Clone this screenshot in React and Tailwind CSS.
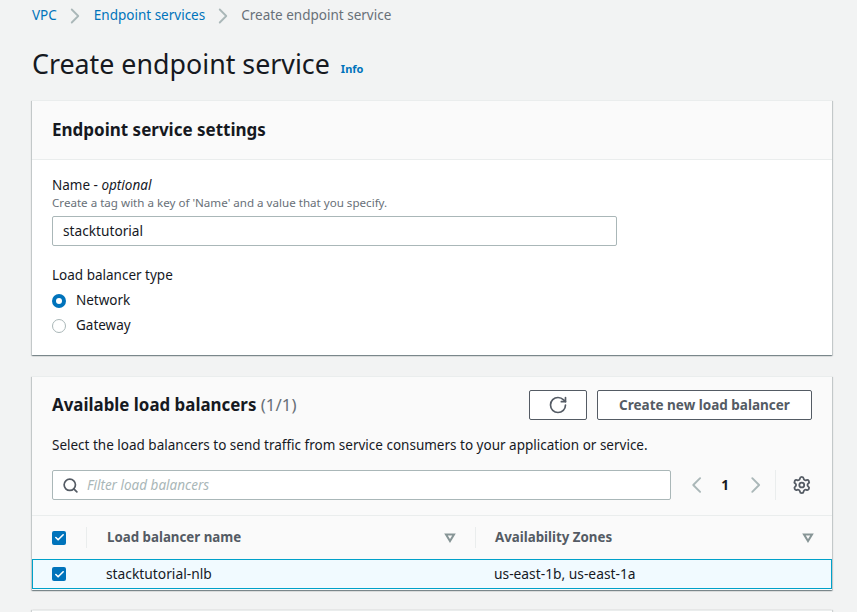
import React from 'react';
import { ChevronRight, ChevronLeft, RotateCw, Search, Settings, Check } from 'lucide-react';

function Checkbox() {
  return (
    <span className="flex h-[14px] w-[14px] items-center justify-center rounded-[2px] bg-[#0073bb]">
      <Check size={11} strokeWidth={3.5} className="text-white" />
    </span>
  );
}

function SortIcon() {
  return (
    <svg width="12" height="10" viewBox="0 0 12 10" className="shrink-0">
      <path d="M2 1.5h8L6 8z" fill="none" stroke="#879596" strokeWidth="2" />
    </svg>
  );
}

function Radio({ checked, label }) {
  return (
    <div className="flex h-[25px] items-center gap-[10px]">
      {checked ? (
        <span className="flex h-[14px] w-[14px] items-center justify-center rounded-full bg-[#0073bb]">
          <span className="h-[6px] w-[6px] rounded-full bg-white" />
        </span>
      ) : (
        <span className="h-[14px] w-[14px] rounded-full border border-[#aab7b8] bg-white" />
      )}
      <span className="text-[13.5px] text-[#16191f]">{label}</span>
    </div>
  );
}

export default function App() {
  return (
    <div className="h-[612px] overflow-hidden bg-[#f2f3f3] pl-[32px] pr-[25px] font-['Noto_Sans',sans-serif] text-[#16191f]">
      {/* breadcrumb */}
      <div className="flex h-[31px] items-center text-[13.5px]">
        <span className="text-[#0073bb]">VPC</span>
        <ChevronRight size={26} strokeWidth={1.7} className="ml-[5px] mr-[6px] text-[#aab7b8]" />
        <span className="text-[#0073bb]">Endpoint services</span>
        <ChevronRight size={26} strokeWidth={1.7} className="mx-[5px] text-[#aab7b8]" />
        <span className="text-[#687078]">Create endpoint service</span>
      </div>

      <div className="flex h-[69px] items-center pb-[3px]">
        <h1 className="text-[26.8px] leading-[40px] text-[#16191f]">Create endpoint service</h1>
        <span className="ml-[11px] mt-[10px] text-[11px] font-bold text-[#0073bb]">Info</span>
      </div>

      {/* settings card */}
      <section className="h-[255px] border-t border-[#eaeded] bg-white shadow-[0_1px_1px_0_rgba(0,28,36,0.3),1px_1px_1px_0_rgba(0,28,36,0.15),-1px_1px_1px_0_rgba(0,28,36,0.15)]">
        <div className="flex h-[59px] items-center border-b border-[#eaeded] bg-[#fafafa] px-[20px]">
          <h2 className="text-[17px] font-bold">Endpoint service settings</h2>
        </div>
        <div className="px-[20px] pt-[16px]">
          <div className="text-[13.5px] leading-[19px]">
            Name - <i>optional</i>
          </div>
          <div className="text-[11.6px] leading-[16px] text-[#687078]">
            Create a tag with a key of 'Name' and a value that you specify.
          </div>
          <div className="mt-[5px] flex h-[30px] w-[565px] items-center rounded-[2px] border border-[#aab7b8] bg-white px-[10px] text-[13.7px]">
            stacktutorial
          </div>
          <div className="mt-[20px] text-[13.5px] leading-[19px]">Load balancer type</div>
          <div className="mt-[3px]">
            <Radio checked label="Network" />
            <Radio label="Gateway" />
          </div>
        </div>
      </section>

      {/* load balancers card */}
      <section className="mt-[21px] h-[214px] border-t border-[#eaeded] bg-[#fafafa] shadow-[0_1px_1px_0_rgba(0,28,36,0.3),1px_1px_1px_0_rgba(0,28,36,0.15),-1px_1px_1px_0_rgba(0,28,36,0.15)]">
        <div className="flex items-start justify-between px-[20px] pt-[13px]">
          <h2 className="mt-[2px] text-[16.9px] font-bold">
            Available load balancers <span className="font-normal text-[#687078]">(1/1)</span>
          </h2>
          <div className="flex gap-[10px]">
            <button className="flex h-[30px] w-[58px] items-center justify-center rounded-[2px] border border-[#545b64] bg-white text-[#545b64]">
              <RotateCw size={20} strokeWidth={2} />
            </button>
            <button className="h-[30px] w-[215px] rounded-[2px] border border-[#545b64] bg-white text-[13.5px] font-bold text-[#545b64]">
              Create new load balancer
            </button>
          </div>
        </div>
        <p className="mt-[15px] px-[20px] text-[13.5px] leading-[20px]">
          Select the load balancers to send traffic from service consumers to your application or service.
        </p>
        <div className="mt-[15px] flex items-center px-[20px]">
          <div className="flex h-[30px] w-[619px] shrink-0 items-center gap-[8px] rounded-[2px] border border-[#aab7b8] bg-white pl-[9px] pr-[10px]">
            <Search size={17} strokeWidth={2.4} className="text-[#545b64]" />
            <span className="text-[13.5px] italic text-[#aab7b8]">Filter load balancers</span>
          </div>
          <ChevronLeft size={28} strokeWidth={1.7} className="ml-[12px] text-[#aab7b8]" />
          <span className="ml-[11px] text-[13.5px] font-bold">1</span>
          <ChevronRight size={28} strokeWidth={1.7} className="ml-[13px] text-[#aab7b8]" />
          <span className="ml-[6px] h-[30px] border-l border-[#eaeded]" />
          <Settings size={20} strokeWidth={2.2} className="ml-[16px] text-[#545b64]" />
        </div>
        <div className="mt-[15px] flex h-[44px] items-center border-t border-[#eaeded] pl-[20px] pr-[18px] text-[13.3px] font-bold text-[#545b64]">
          <Checkbox />
          <span className="ml-[20px] h-[21px] border-l border-[#eaeded]" />
          <span className="ml-[20px] flex-1">Load balancer name</span>
          <SortIcon />
          <span className="ml-[19px] h-[21px] border-l border-[#eaeded]" />
          <span className="ml-[19px] w-[307px]">Availability Zones</span>
          <SortIcon />
        </div>
        <div className="flex h-[30px] items-center border border-[#00a1c9] bg-[#f1faff] pl-[19px] text-[13.8px]">
          <Checkbox />
          <span className="ml-[40px] w-[388px]">stacktutorial-nlb</span>
          <span>us-east-1b, us-east-1a</span>
        </div>
      </section>

      <section className="mt-[20px] h-[40px] border-t border-[#eaeded] bg-white shadow-[1px_0_1px_0_rgba(0,28,36,0.15),-1px_0_1px_0_rgba(0,28,36,0.15)]" />
    </div>
  );
}
